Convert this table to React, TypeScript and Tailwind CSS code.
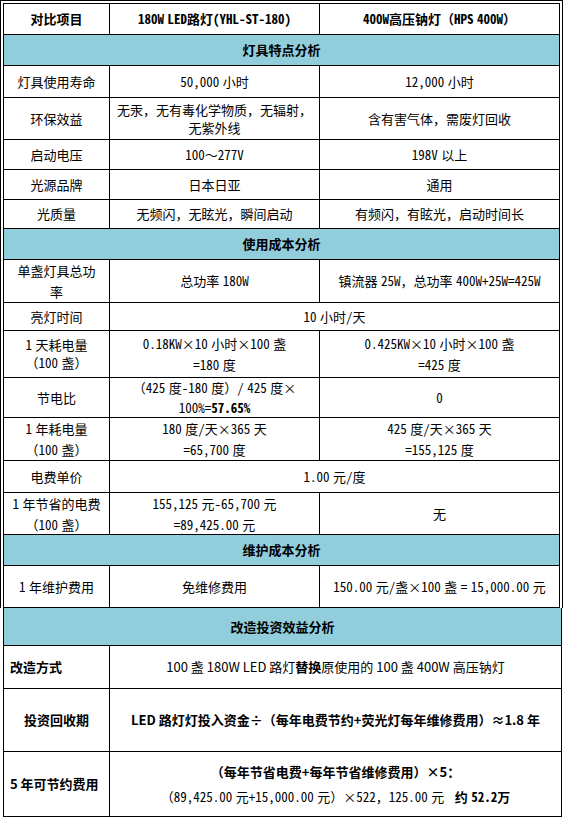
import React from "react";

const MONO = "font-['Noto_Sans_Mono_CJK_SC','Noto_Sans_CJK_SC',sans-serif]";
const SANS = "font-['Noto_Sans_CJK_SC',sans-serif]";

function C({ children, last, className = "" }: { children?: React.ReactNode; last?: boolean; className?: string }) {
  return (
    <div
      className={
        "flex items-center justify-center text-center whitespace-nowrap " +
        (last ? "" : "border-r border-black ") +
        className
      }
    >
      <div>{children}</div>
    </div>
  );
}

function Teal({ children, h }: { children: React.ReactNode; h: string }) {
  return (
    <div className={"bg-[#92cddc] border-b border-black flex items-center justify-center font-bold " + h}>
      {children}
    </div>
  );
}

const ROW = "grid grid-cols-[106px_210px_239px] border-b border-black";
const ROWS = "grid grid-cols-[106px_1fr] border-b border-black";

export default function App() {
  return (
    <div className="w-[563px] bg-white text-black text-[13px]">
      <div className="border-l border-t border-r border-black pt-[2px] px-[2px]">
        <div className={"border-l border-t border-r border-black [word-spacing:-3px] " + MONO}>
          <div className={ROW + " h-[31px] font-bold"}>
            <C>对比项目</C>
            <C>180W LED路灯(YHL-ST-180)</C>
            <C last>400W高压钠灯（HPS 400W）</C>
          </div>
          <Teal h="h-[31px]">灯具特点分析</Teal>
          <div className={ROW + " h-[32px]"}>
            <C>灯具使用寿命</C>
            <C>50,000 小时</C>
            <C last>12,000 小时</C>
          </div>
          <div className={ROW + " h-[42px]"}>
            <C className="leading-[18px]">环保效益</C>
            <C className="leading-[18px]">
              无汞，无有毒化学物质，无辐射，
              <br />
              无紫外线
            </C>
            <C last>含有害气体，需废灯回收</C>
          </div>
          <div className={ROW + " h-[30px]"}>
            <C>启动电压</C>
            <C>100～277V</C>
            <C last>198V 以上</C>
          </div>
          <div className={ROW + " h-[30px]"}>
            <C>光源品牌</C>
            <C>日本日亚</C>
            <C last>通用</C>
          </div>
          <div className={ROW + " h-[29px]"}>
            <C>光质量</C>
            <C>无频闪，无眩光，瞬间启动</C>
            <C last>有频闪，有眩光，启动时间长</C>
          </div>
          <Teal h="h-[31px]">使用成本分析</Teal>
          <div className={ROW + " h-[43px]"}>
            <C className="leading-[21px]">
              单盏灯具总功
              <br />率
            </C>
            <C>总功率 180W</C>
            <C last>镇流器 25W，总功率 400W+25W=425W</C>
          </div>
          <div className={ROWS + " h-[28px]"}>
            <C>亮灯时间</C>
            <C last>10 小时/天</C>
          </div>
          <div className={ROW + " h-[47px]"}>
            <C className="leading-[18px]">
              1 天耗电量
              <br />
              （100 盏）
            </C>
            <C className="leading-[21px]">
              0.18KW×10 小时×100 盏
              <br />
              =180 度
            </C>
            <C last className="leading-[21px]">
              0.425KW×10 小时×100 盏
              <br />
              =425 度
            </C>
          </div>
          <div className={ROW + " h-[40px]"}>
            <C>节电比</C>
            <C className="leading-[20px]">
              （425 度-180 度）/ 425 度×
              <br />
              100%=<span className="font-bold">57.65%</span>
            </C>
            <C last>0</C>
          </div>
          <div className={ROW + " h-[43px]"}>
            <C className="leading-[21px]">
              1 年耗电量
              <br />
              （100 盏）
            </C>
            <C className="leading-[21px]">
              180 度/天×365 天
              <br />
              =65,700 度
            </C>
            <C last className="leading-[21px]">
              425 度/天×365 天
              <br />
              =155,125 度
            </C>
          </div>
          <div className={ROWS + " h-[32px]"}>
            <C>电费单价</C>
            <C last>1.00 元/度</C>
          </div>
          <div className={ROW + " h-[42px]"}>
            <C className="leading-[21px]">
              1 年节省的电费
              <br />
              （100 盏）
            </C>
            <C className="leading-[21px]">
              155,125 元-65,700 元
              <br />
              =89,425.00 元
            </C>
            <C last>无</C>
          </div>
          <Teal h="h-[31px]">维护成本分析</Teal>
          <div className={ROW + " h-[42px]"}>
            <C>1 年维护费用</C>
            <C>免维修费用</C>
            <C last>150.00 元/盏×100 盏 = 15,000.00 元</C>
          </div>
        </div>
      </div>
      <div className={"ml-[3px] w-[559px] border-l border-r border-b border-black " + SANS}>
        <Teal h="h-[38px]">改造投资效益分析</Teal>
        <div className={ROWS + " h-[43px]"}>
          <div className="flex items-center justify-start pl-[6px] font-bold border-r border-black">改造方式</div>
          <C last>
            100 盏 180W LED 路灯<span className="font-bold">替换</span>原使用的 100 盏 400W 高压钠灯
          </C>
        </div>
        <div className={ROWS + " h-[63px]"}>
          <C className="font-bold">投资回收期</C>
          <C last className="font-bold">
            LED 路灯灯投入资金÷（每年电费节约+荧光灯每年维修费用）≈1.8 年
          </C>
        </div>
        <div className="grid grid-cols-[106px_1fr] h-[64px]">
          <div className="flex items-center justify-start pl-[6px] font-bold border-r border-black">5 年可节约费用</div>
          <C last className="leading-[25px]">
            <span className="font-bold">（每年节省电费+每年节省维修费用）×5：</span>
            <br />
            <span className={"[word-spacing:-3px] " + MONO}>
              （89,425.00 元+15,000.00 元）×522，125.00 元{"\u00a0\u00a0\u00a0"}
              <span className="font-bold">约 52.2万</span>
            </span>
          </C>
        </div>
      </div>
    </div>
  );
}
